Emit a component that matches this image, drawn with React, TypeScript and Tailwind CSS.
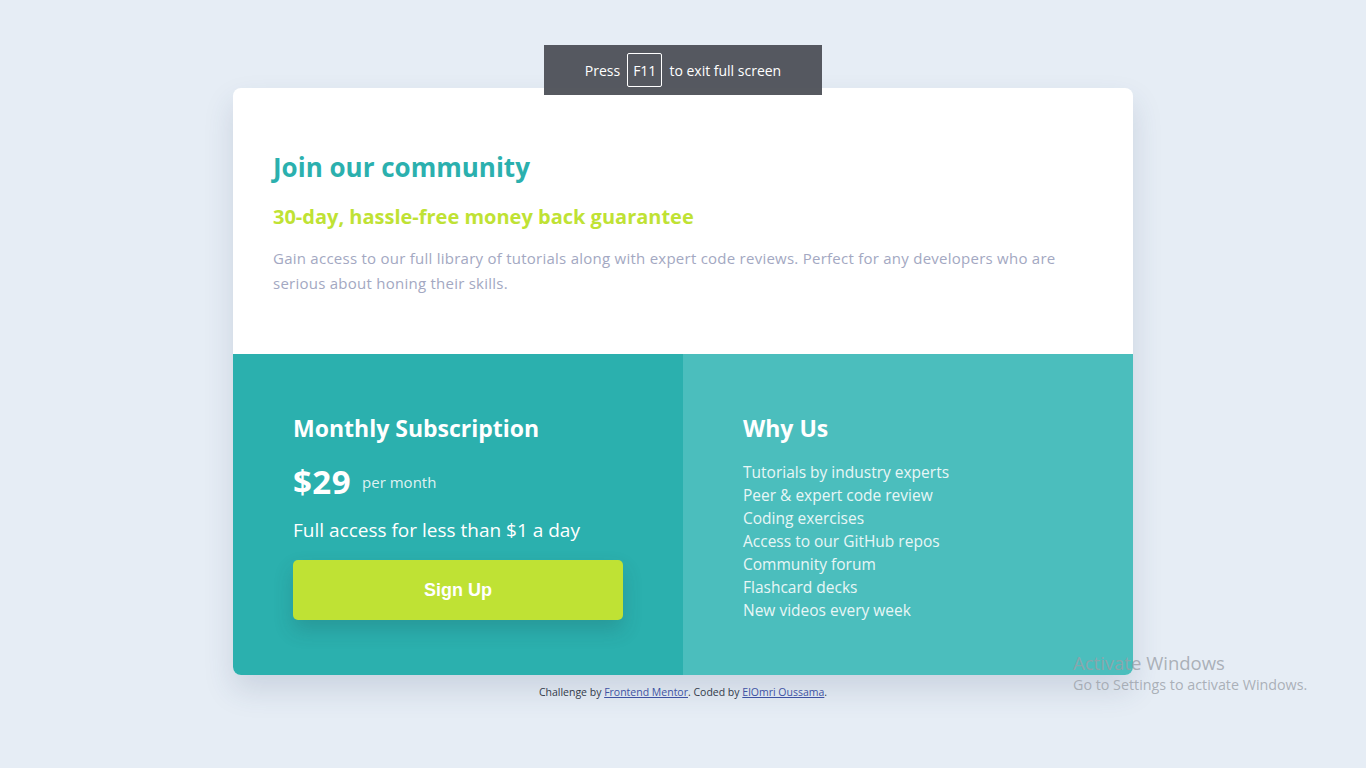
import React from 'react';

const features = [
  'Tutorials by industry experts',
  'Peer & expert code review',
  'Coding exercises',
  'Access to our GitHub repos',
  'Community forum',
  'Flashcard decks',
  'New videos every week',
];

export default function App() {
  return (
    <div className="relative min-h-screen w-full bg-[#e6edf5] font-['Open_Sans',sans-serif]">
      <div className="flex flex-col items-center pt-[88px]">
        <div className="w-[900px] overflow-hidden rounded-[8px] bg-white shadow-[0_15px_30px_rgba(48,70,110,0.15)]">
          <div className="h-[266px] px-[40px] pt-[61px]">
            <h1 className="text-[26px] font-bold leading-[36px] text-[#2bb0ae]">Join our community</h1>
            <h2 className="mt-[19px] text-[20px] font-bold leading-[26px] text-[#bfe234]">
              30-day, hassle-free money back guarantee
            </h2>
            <p className="mt-[16px] w-[800px] text-[15px] leading-[25px] tracking-[0.25px] text-[#a3a8c2]">
              Gain access to our full library of tutorials along with expert code reviews. Perfect for any developers who are serious about honing their skills.
            </p>
          </div>
          <div className="flex h-[321px]">
            <div className="w-[450px] bg-[#2bb0ae] px-[60px] pt-[58px] text-white">
              <h3 className="text-[23px] font-bold leading-[32px]">Monthly Subscription</h3>
              <div className="mt-[18px] flex items-center">
                <span className="text-[33px] font-bold leading-[40px] tracking-[0.5px]">$29</span>
                <span className="ml-[11px] text-[15px] text-[#dff2f2]">per month</span>
              </div>
              <p className="mt-[15px] text-[19px] leading-[26px]">Full access for less than $1 a day</p>
              <button className="mt-[17px] h-[60px] w-[330px] rounded-[5px] bg-[#bfe234] font-['Liberation_Sans',Arial,sans-serif] text-[18px] font-bold text-white shadow-[0_10px_20px_rgba(30,60,70,0.2)]">
                Sign Up
              </button>
            </div>
            <div className="w-[450px] bg-[#4bbebd] px-[60px] pt-[58px] text-white">
              <h3 className="text-[23px] font-bold leading-[32px]">Why Us</h3>
              <ul className="mt-[17px] text-[15.5px] leading-[23px] text-[#e8f6f6]">
                {features.map(f => (
                  <li key={f}>{f}</li>
                ))}
              </ul>
            </div>
          </div>
        </div>
        <p className="mt-[10px] text-[10.5px] text-[#333a4a]">
          Challenge by <a className="text-[#3e52a3] underline" href="#">Frontend Mentor</a>. Coded by{' '}
          <a className="text-[#3e52a3] underline" href="#">ElOmri Oussama</a>.
        </p>
      </div>

      <div className="absolute left-[544px] top-[45px] flex h-[50px] w-[278px] items-center justify-center gap-[7px] bg-[#4d5057]/95 font-['Open_Sans',sans-serif] text-[14px] text-white">
        <span>Press</span>
        <span className="flex h-[34px] items-center rounded-[2px] border border-white px-[5px]">F11</span>
        <span>to exit full screen</span>
      </div>

      <div className="pointer-events-none absolute left-[1073px] top-[651px] font-['Open_Sans',sans-serif] text-[#9aa0a8]/80">
        <div className="text-[18.5px] leading-[24px]">Activate Windows</div>
        <div className="text-[14.3px] leading-[20px]">Go to Settings to activate Windows.</div>
      </div>
    </div>
  );
}
